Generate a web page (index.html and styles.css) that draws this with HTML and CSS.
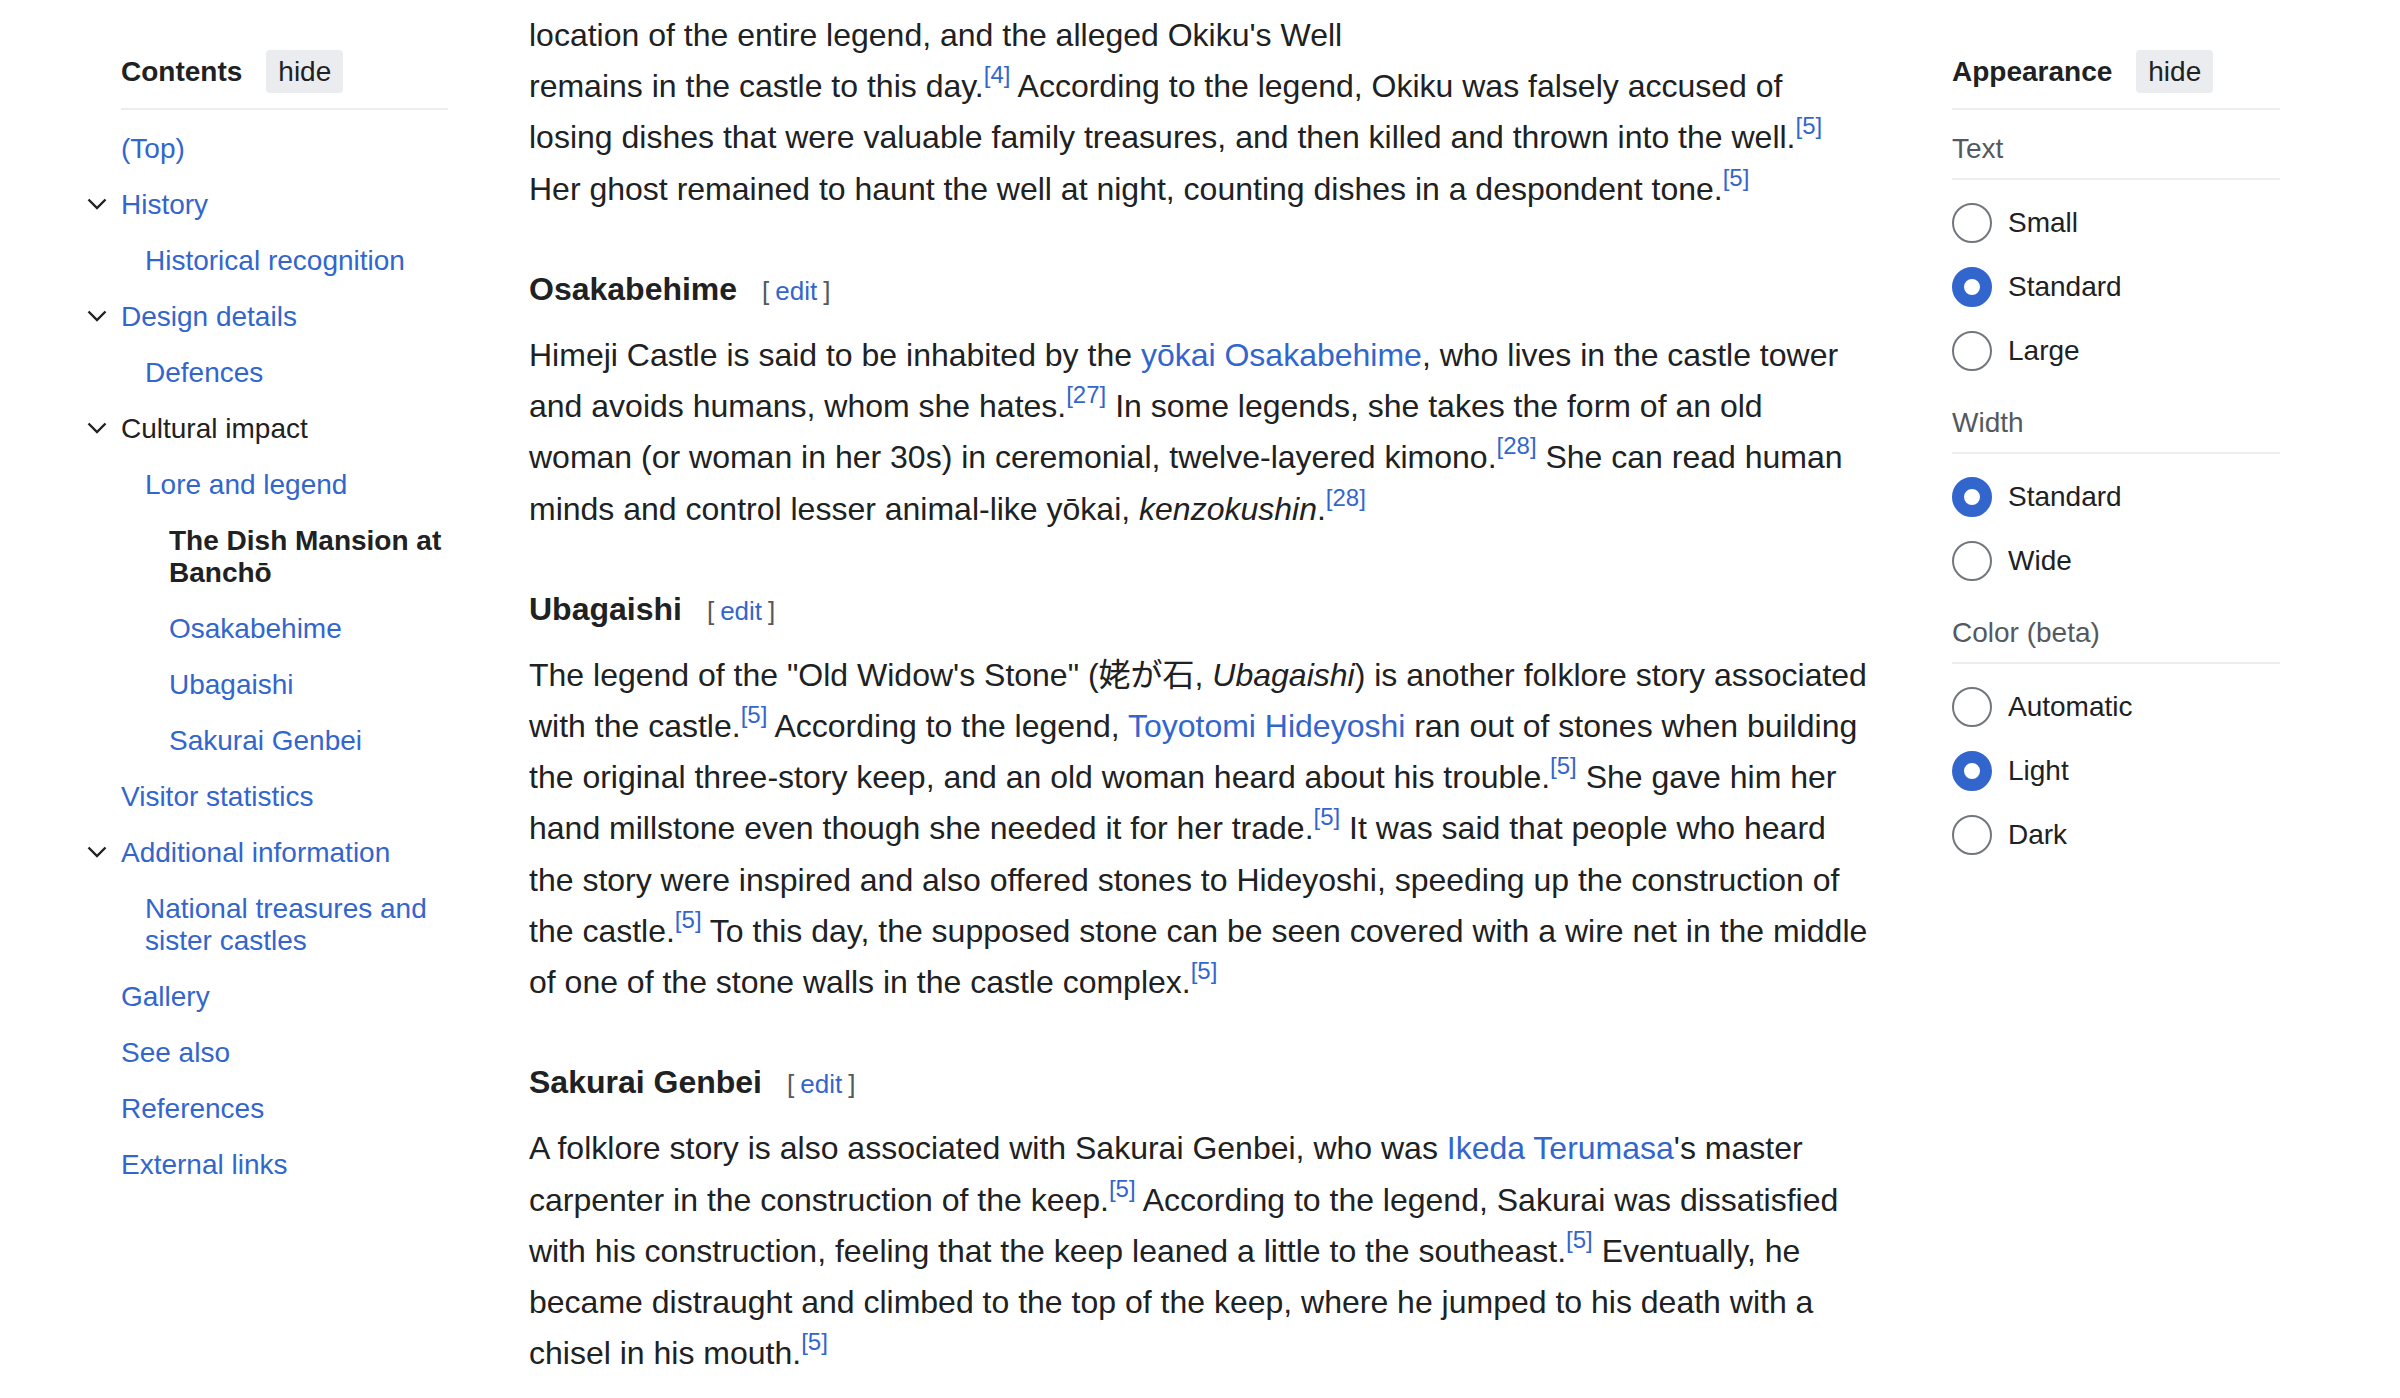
FILE: index.html
```html
<!DOCTYPE html>
<html lang="en">
<head>
<meta charset="utf-8">
<title>Himeji Castle</title>
<link rel="stylesheet" href="styles.css">
</head>
<body>
<div class="page">
  <nav class="toc">
    <div class="panel-head">
      <h2 class="panel-title">Contents</h2>
      <button class="hide-btn">hide</button>
    </div>
    <ul class="toc-list">
      <li class="toc-item"><a class="toc-link" href="#">(Top)</a></li>
      <li class="toc-item">
        <span class="toggle"><svg width="20" height="12" viewBox="0 0 20 12"><path d="M1.5 1.5 L10 10 L18.5 1.5" fill="none" stroke="#202122" stroke-width="2.4"/></svg></span>
        <a class="toc-link" href="#">History</a>
        <ul>
          <li class="toc-item"><a class="toc-link" href="#">Historical recognition</a></li>
        </ul>
      </li>
      <li class="toc-item">
        <span class="toggle"><svg width="20" height="12" viewBox="0 0 20 12"><path d="M1.5 1.5 L10 10 L18.5 1.5" fill="none" stroke="#202122" stroke-width="2.4"/></svg></span>
        <a class="toc-link" href="#">Design details</a>
        <ul>
          <li class="toc-item"><a class="toc-link" href="#">Defences</a></li>
        </ul>
      </li>
      <li class="toc-item">
        <span class="toggle"><svg width="20" height="12" viewBox="0 0 20 12"><path d="M1.5 1.5 L10 10 L18.5 1.5" fill="none" stroke="#202122" stroke-width="2.4"/></svg></span>
        <a class="toc-link parent" href="#">Cultural impact</a>
        <ul>
          <li class="toc-item"><a class="toc-link" href="#">Lore and legend</a>
            <ul>
              <li class="toc-item"><a class="toc-link current" href="#">The Dish Mansion at Banchō</a></li>
              <li class="toc-item"><a class="toc-link" href="#">Osakabehime</a></li>
              <li class="toc-item"><a class="toc-link" href="#">Ubagaishi</a></li>
              <li class="toc-item"><a class="toc-link" href="#">Sakurai Genbei</a></li>
            </ul>
          </li>
        </ul>
      </li>
      <li class="toc-item"><a class="toc-link" href="#">Visitor statistics</a></li>
      <li class="toc-item">
        <span class="toggle"><svg width="20" height="12" viewBox="0 0 20 12"><path d="M1.5 1.5 L10 10 L18.5 1.5" fill="none" stroke="#202122" stroke-width="2.4"/></svg></span>
        <a class="toc-link" href="#">Additional information</a>
        <ul>
          <li class="toc-item"><a class="toc-link" href="#">National treasures and sister castles</a></li>
        </ul>
      </li>
      <li class="toc-item"><a class="toc-link" href="#">Gallery</a></li>
      <li class="toc-item"><a class="toc-link" href="#">See also</a></li>
      <li class="toc-item"><a class="toc-link" href="#">References</a></li>
      <li class="toc-item"><a class="toc-link" href="#">External links</a></li>
    </ul>
  </nav>

  <main class="content">
    <p>location of the entire legend, and the alleged Okiku's Well<br>remains in the castle to this day.<sup class="ref"><a href="#">[4]</a></sup> According to the legend, Okiku was falsely accused of losing dishes that were valuable family treasures, and then killed and thrown into the well.<sup class="ref"><a href="#">[5]</a></sup> Her ghost remained to haunt the well at night, counting dishes in a despondent tone.<sup class="ref"><a href="#">[5]</a></sup></p>

    <h3 class="heading"><span>Osakabehime</span><span class="editsection"><span class="bracket">[</span><a href="#">edit</a><span class="bracket">]</span></span></h3>
    <p>Himeji Castle is said to be inhabited by the <a href="#">yōkai Osakabehime</a>, who lives in the castle tower and avoids humans, whom she hates.<sup class="ref"><a href="#">[27]</a></sup> In some legends, she takes the form of an old woman (or woman in her 30s) in ceremonial, twelve-layered kimono.<sup class="ref"><a href="#">[28]</a></sup> She can read human minds and control lesser animal-like yōkai, <i>kenzokushin</i>.<sup class="ref"><a href="#">[28]</a></sup></p>

    <h3 class="heading"><span>Ubagaishi</span><span class="editsection"><span class="bracket">[</span><a href="#">edit</a><span class="bracket">]</span></span></h3>
    <p>The legend of the "Old Widow's Stone" (<span lang="ja">姥が石</span>, <i>Ubagaishi</i>) is another folklore story associated with the castle.<sup class="ref"><a href="#">[5]</a></sup> According to the legend, <a href="#">Toyotomi Hideyoshi</a> ran out of stones when building the original three-story keep, and an old woman heard about his trouble.<sup class="ref"><a href="#">[5]</a></sup> She gave him her hand millstone even though she needed it for her trade.<sup class="ref"><a href="#">[5]</a></sup> It was said that people who heard the story were inspired and also offered stones to Hideyoshi, speeding up the construction of the castle.<sup class="ref"><a href="#">[5]</a></sup> To this day, the supposed stone can be seen covered with a wire net in the middle of one of the stone walls in the castle complex.<sup class="ref"><a href="#">[5]</a></sup></p>

    <h3 class="heading"><span>Sakurai Genbei</span><span class="editsection"><span class="bracket">[</span><a href="#">edit</a><span class="bracket">]</span></span></h3>
    <p>A folklore story is also associated with Sakurai Genbei, who was <a href="#">Ikeda Terumasa</a>'s master carpenter in the construction of the keep.<sup class="ref"><a href="#">[5]</a></sup> According to the legend, Sakurai was dissatisfied with his construction, feeling that the keep leaned a little to the southeast.<sup class="ref"><a href="#">[5]</a></sup> Eventually, he became distraught and climbed to the top of the keep, where he jumped to his death with a chisel in his mouth.<sup class="ref"><a href="#">[5]</a></sup></p>
  </main>

  <aside class="appearance">
    <div class="panel-head">
      <h2 class="panel-title">Appearance</h2>
      <button class="hide-btn">hide</button>
    </div>
    <section class="opt-group">
      <div class="opt-label">Text</div>
      <label class="radio"><input type="radio" name="text" class="radio-input">Small</label>
      <label class="radio"><input type="radio" name="text" class="radio-input" checked>Standard</label>
      <label class="radio"><input type="radio" name="text" class="radio-input">Large</label>
    </section>
    <section class="opt-group">
      <div class="opt-label">Width</div>
      <label class="radio"><input type="radio" name="width" class="radio-input" checked>Standard</label>
      <label class="radio"><input type="radio" name="width" class="radio-input">Wide</label>
    </section>
    <section class="opt-group">
      <div class="opt-label">Color (beta)</div>
      <label class="radio"><input type="radio" name="color" class="radio-input">Automatic</label>
      <label class="radio"><input type="radio" name="color" class="radio-input" checked>Light</label>
      <label class="radio"><input type="radio" name="color" class="radio-input">Dark</label>
    </section>
  </aside>
</div>
</body>
</html>
```

FILE: styles.css
```css
* { box-sizing: border-box; }

html, body {
  margin: 0;
  padding: 0;
  background: #ffffff;
}

body {
  font-family: "Liberation Sans", Arial, Helvetica, "Noto Sans CJK JP", sans-serif;
  color: #202122;
}

a {
  color: #3366cc;
  text-decoration: none;
}

.page {
  display: flex;
  align-items: flex-start;
  padding-left: 121px;
}

/* ---------- side panels ---------- */
.toc {
  width: 327px;
  flex: none;
}

.appearance {
  width: 328px;
  flex: none;
  margin-left: 80px;
}

.panel-head {
  display: flex;
  align-items: center;
  gap: 24px;
  margin-top: 50px;
  padding-bottom: 15px;
  border-bottom: 2px solid #eaecf0;
}

.panel-title {
  margin: 0;
  font-size: 28px;
  font-weight: bold;
  line-height: 43px;
  color: #202122;
}

.hide-btn {
  font-family: inherit;
  font-size: 28px;
  height: 43px;
  padding: 0 12px;
  border: 0;
  border-radius: 4px;
  background: #eaecf0;
  color: #202122;
}

/* ---------- table of contents ---------- */
.toc-list,
.toc-list ul {
  list-style: none;
  margin: 0;
  padding: 0;
}

.toc-list {
  margin-top: 11px;
}

.toc-list ul {
  padding-left: 24px;
}

.toc-item {
  position: relative;
}

.toc-link {
  display: block;
  padding: 12px 0;
  font-size: 28px;
  line-height: 32px;
}

.toc-link.parent {
  color: #202122;
}

.toc-link.current {
  color: #202122;
  font-weight: bold;
}

.toggle {
  position: absolute;
  left: -34px;
  top: 21px;
  width: 20px;
  height: 12px;
  display: block;
}

.toggle svg {
  display: block;
}

/* ---------- article ---------- */
.content {
  width: 1343px;
  flex: none;
  margin-left: 81px;
  font-size: 32px;
  line-height: 1.6;
  color: #202122;
}

.content p {
  margin: 15px 0 16px;
}

.content p:first-child {
  margin-top: 10px;
}

.heading {
  margin: 49px 0 0;
  font-size: 32px;
  font-weight: bold;
  line-height: 1.6;
  color: #202122;
}

.editsection {
  font-size: 26px;
  font-weight: normal;
  margin-left: 25px;
}

.bracket {
  color: #54595d;
}

.bracket:first-child {
  margin-right: 6px;
}

.bracket:last-child {
  margin-left: 6px;
}

.ref {
  font-size: 24px;
  line-height: 0;
  vertical-align: 14px;
}

/* ---------- appearance options ---------- */
.opt-group {
  margin-top: 23px;
}

.opt-group + .opt-group {
  margin-top: 24px;
}

.opt-label {
  font-size: 28px;
  line-height: 32px;
  color: #54595d;
  padding-bottom: 13px;
  border-bottom: 2px solid #eaecf0;
  margin-bottom: 11px;
}

.radio {
  display: flex;
  align-items: center;
  gap: 16px;
  height: 64px;
  font-size: 28px;
  color: #202122;
}

.radio-input {
  appearance: none;
  -webkit-appearance: none;
  margin: 0;
  width: 40px;
  height: 40px;
  flex: none;
  border-radius: 50%;
  border: 2px solid #72777d;
  background: #ffffff;
}

.radio-input:checked {
  border: 12px solid #3366cc;
}
```
